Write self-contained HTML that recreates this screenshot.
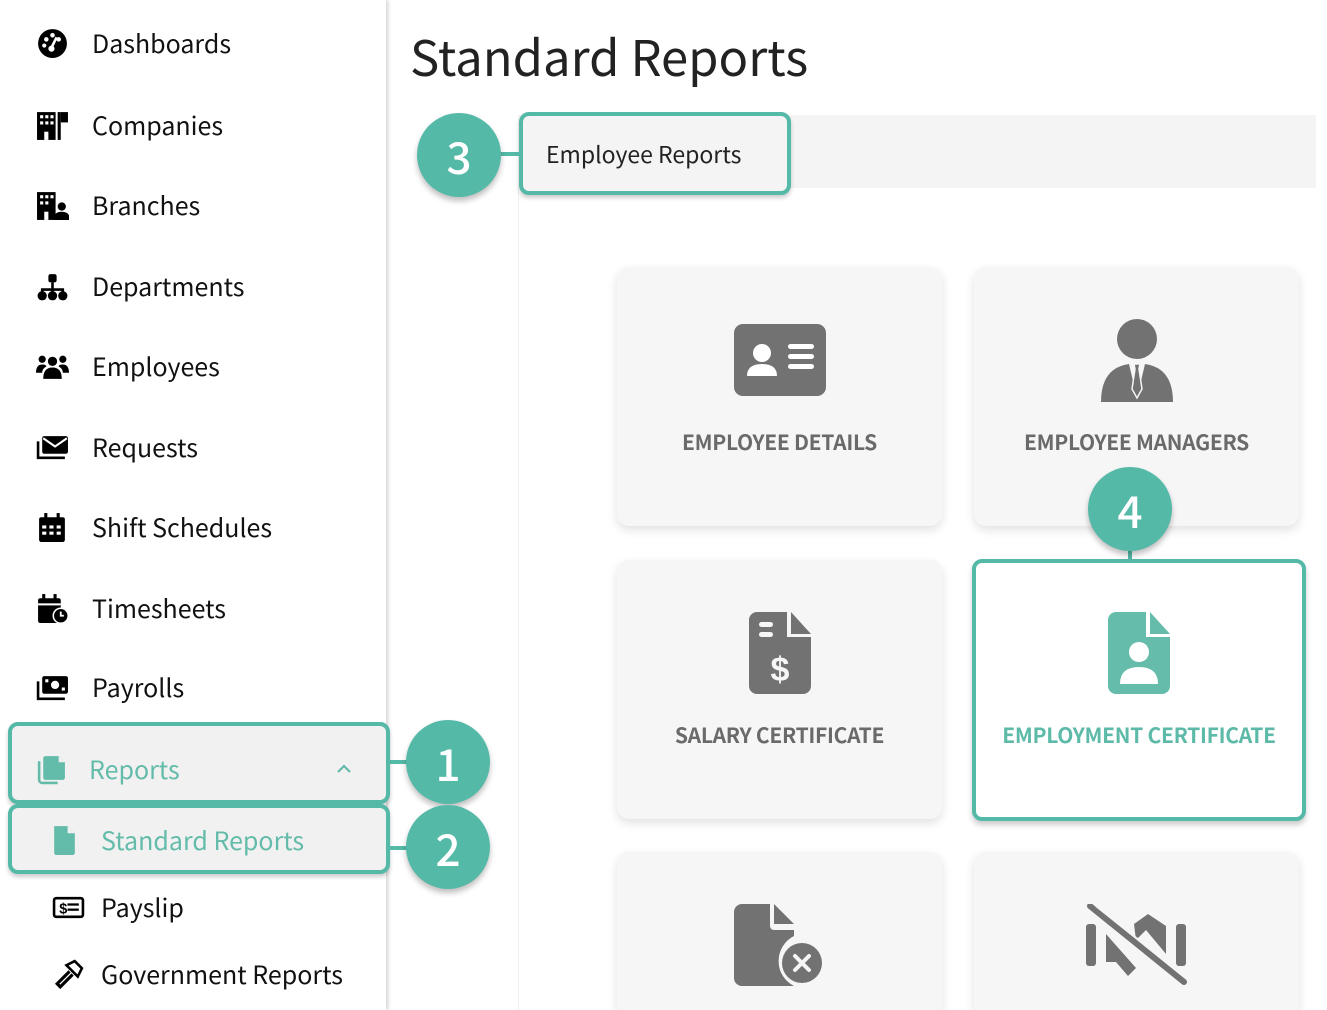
<!DOCTYPE html>
<html><head><meta charset="utf-8"><style>
*{margin:0;padding:0;box-sizing:border-box}
html{width:1327px;height:1010px;overflow:hidden}
body{width:1327px;height:1010px;overflow:hidden;background:#fff;font-family:"Noto Sans CJK JP","Liberation Sans",sans-serif;position:relative;color:#111}
.side{position:absolute;left:0;top:0;width:386px;height:1010px;background:#fff;box-shadow:2px 0 4px rgba(0,0,0,.18);z-index:2}
.item{position:absolute;left:0;height:40px;display:flex;align-items:center;font-size:25px}
.item svg{position:absolute;left:36px;width:33px;height:33px}
.item span{position:absolute;left:92px;white-space:nowrap}
.hl{position:absolute;border:4px solid #55b9a8;border-radius:10px;background:#f1f1f1;box-shadow:0 3px 4px rgba(0,0,0,.2)}
.badge{position:absolute;width:84px;height:84px;border-radius:50%;background:#55b9a8;color:#fff;font-size:44px;font-weight:500;display:flex;align-items:center;justify-content:center;box-shadow:0 4px 6px rgba(0,0,0,.25);z-index:5}
.line{position:absolute;background:#55b9a8;z-index:4}
.card{position:absolute;width:325px;height:259px;background:#f6f6f6;border-radius:12px;box-shadow:0 4px 10px rgba(0,0,0,.12)}
.card .lbl{position:absolute;top:160px;left:-10px;right:-10px;text-align:center;font-size:21px;font-weight:bold;color:#6a6a6a;letter-spacing:-0.3px}
.card svg{position:absolute;left:50%;transform:translateX(-50%)}
</style></head><body>
<div class="side">
 <div class="item" style="top:23px"><svg viewBox="0 0 32 32"><circle cx="16" cy="16" r="14" fill="#000"/><circle cx="10" cy="12" r="2.2" fill="#fff"/><circle cx="16" cy="8" r="2.2" fill="#fff"/><circle cx="22" cy="12" r="2.2" fill="#fff"/><circle cx="8" cy="18" r="2" fill="#fff"/><path d="M20 10 L15 20" stroke="#fff" stroke-width="2.5"/><circle cx="15" cy="21" r="3" fill="#fff"/></svg><span>Dashboards</span></div>
 <div class="item" style="top:105px"><svg viewBox="0 0 32 32"><rect x="1" y="3" width="18" height="27" fill="#000"/><rect x="21" y="3" width="3" height="27" fill="#000"/><rect x="24" y="3" width="7" height="10" fill="#000"/><g fill="#fff"><rect x="4" y="6" width="3" height="3"/><rect x="9" y="6" width="3" height="3"/><rect x="14" y="6" width="3" height="3"/><rect x="4" y="12" width="3" height="3"/><rect x="9" y="12" width="3" height="3"/><rect x="14" y="12" width="3" height="3"/><rect x="8" y="22" width="4" height="8"/></g></svg><span>Companies</span></div>
 <div class="item" style="top:185px"><svg viewBox="0 0 32 32"><rect x="1" y="3" width="18" height="27" fill="#000"/><g fill="#fff"><rect x="4" y="6" width="3" height="3"/><rect x="9" y="6" width="3" height="3"/><rect x="14" y="6" width="3" height="3"/><rect x="4" y="12" width="3" height="3"/><rect x="9" y="12" width="3" height="3"/><rect x="8" y="22" width="4" height="8"/></g><circle cx="25" cy="17" r="4" fill="#000"/><path d="M17 30 Q17 22 25 22 Q33 22 33 30Z" fill="#000"/></svg><span>Branches</span></div>
 <div class="item" style="top:266px"><svg viewBox="0 0 32 32"><rect x="12" y="4" width="8" height="8" rx="2" fill="#000"/><path d="M16 12v5M6 24v-5h20v5M16 17v7" stroke="#000" stroke-width="2.5" fill="none"/><circle cx="6" cy="25" r="4.5" fill="#000"/><circle cx="16" cy="25" r="4.5" fill="#000"/><circle cx="26" cy="25" r="4.5" fill="#000"/></svg><span>Departments</span></div>
 <div class="item" style="top:346px"><svg viewBox="0 0 32 32"><circle cx="16" cy="11" r="4.5" fill="#000"/><circle cx="6" cy="9" r="3.5" fill="#000"/><circle cx="26" cy="9" r="3.5" fill="#000"/><path d="M7 28 Q7 17 16 17 Q25 17 25 28Z" fill="#000"/><path d="M0 22 Q0 14 6 14 Q10 14 10 16 Q6 18 6 22Z" fill="#000"/><path d="M32 22 Q32 14 26 14 Q22 14 22 16 Q26 18 26 22Z" fill="#000"/></svg><span>Employees</span></div>
 <div class="item" style="top:427px"><svg viewBox="0 0 32 32"><path d="M2 10v16h26" stroke="#000" stroke-width="2.5" fill="none"/><rect x="6" y="5" width="25" height="17" rx="2" fill="#000"/><path d="M7 7 L18.5 15 L30 7" stroke="#fff" stroke-width="2" fill="none"/></svg><span>Requests</span></div>
 <div class="item" style="top:507px"><svg viewBox="0 0 32 32"><rect x="3" y="6" width="25" height="24" rx="2" fill="#000"/><rect x="8" y="2" width="3" height="6" fill="#000"/><rect x="20" y="2" width="3" height="6" fill="#000"/><g fill="#fff"><rect x="6" y="14" width="4" height="3"/><rect x="13" y="14" width="4" height="3"/><rect x="20" y="14" width="4" height="3"/><rect x="6" y="20" width="4" height="3"/><rect x="13" y="20" width="4" height="3"/><rect x="20" y="20" width="4" height="3"/></g></svg><span>Shift Schedules</span></div>
 <div class="item" style="top:588px"><svg viewBox="0 0 32 32"><rect x="2" y="6" width="22" height="24" rx="2" fill="#000"/><rect x="6" y="2" width="3" height="6" fill="#000"/><rect x="17" y="2" width="3" height="6" fill="#000"/><rect x="2" y="11" width="22" height="2" fill="#fff"/><circle cx="24" cy="23" r="8" fill="#fff"/><circle cx="24" cy="23" r="6.5" fill="#000"/><path d="M24 19v4h3" stroke="#fff" stroke-width="1.8" fill="none"/></svg><span>Timesheets</span></div>
 <div class="item" style="top:667px"><svg viewBox="0 0 32 32"><path d="M2 10v17h26" stroke="#000" stroke-width="2.5" fill="none"/><rect x="6" y="5" width="25" height="17" rx="2" fill="#000"/><circle cx="18.5" cy="13.5" r="4" fill="#fff"/><rect x="9" y="8" width="3" height="3" fill="#fff"/><rect x="25" y="16" width="3" height="3" fill="#fff"/></svg><span>Payrolls</span></div>
 <div class="hl" style="left:8px;top:722px;width:382px;height:82px"></div>
 <div class="hl" style="left:8px;top:804px;width:382px;height:70px"></div>
 <div class="item" style="top:749px;color:#63bba9"><svg viewBox="0 0 32 32" style="left:35px"><path d="M4 8v18a3 3 0 0 0 3 3h15" stroke="#63bba9" stroke-width="2.5" fill="none"/><path d="M10 3h13l6 6v15a2 2 0 0 1-2 2H10a2 2 0 0 1-2-2V5a2 2 0 0 1 2-2z" fill="#63bba9"/><path d="M23 3v6h6" fill="#f1f1f1"/></svg><span style="left:89px">Reports</span><svg viewBox="0 0 20 20" style="left:334px;width:20px;height:20px"><path d="M4 13 L10 7 L16 13" stroke="#63bba9" stroke-width="2.2" fill="none"/></svg></div>
 <div class="item" style="top:820px;color:#63bba9"><svg viewBox="0 0 32 32" style="left:48px"><path d="M6 2h13l7 7v19a2 2 0 0 1-2 2H8a2 2 0 0 1-2-2z" fill="#63bba9"/><path d="M19 2v7h7" fill="#f1f1f1"/></svg><span style="left:101px">Standard Reports</span></div>
 <div class="item" style="top:887px"><svg viewBox="0 0 32 32" style="left:52px"><rect x="2" y="7" width="28" height="18" rx="2" fill="none" stroke="#000" stroke-width="2.5"/><text x="7" y="22" font-size="14" font-weight="bold" font-family="Liberation Sans">$</text><rect x="15" y="12" width="11" height="2.2" fill="#000"/><rect x="15" y="17" width="11" height="2.2" fill="#000"/></svg><span style="left:101px">Payslip</span></div>
 <div class="item" style="top:954px"><svg viewBox="0 0 32 32" style="left:52px"><path d="M14 7 L22 3 L29 10 L25 18 Z" fill="none" stroke="#000" stroke-width="2.5"/><path d="M17 13 L5 25 L8 28 L20 16" fill="none" stroke="#000" stroke-width="3"/></svg><span style="left:101px">Government Reports</span></div>
</div>
<div class="line" style="left:386px;top:760px;width:30px;height:4px"></div>
<div class="line" style="left:386px;top:846px;width:30px;height:4px"></div>
<div class="badge" style="left:406px;top:720px">1</div>
<div class="badge" style="left:406px;top:805px">2</div>

<div style="position:absolute;left:410px;top:20px;font-size:49px;color:#222;white-space:nowrap">Standard Reports</div>
<div style="position:absolute;left:518px;top:115px;width:798px;height:73px;background:#f4f4f4"></div>
<div style="position:absolute;left:518px;top:188px;width:1px;height:822px;background:#eee"></div>
<div class="hl" style="left:519px;top:112px;width:272px;height:83px;background:#f4f4f4;z-index:3"></div>
<div style="position:absolute;left:546px;top:136px;font-size:23px;color:#222;z-index:4">Employee Reports</div>
<div class="line" style="left:495px;top:152px;width:26px;height:4px"></div>
<div class="badge" style="left:417px;top:113px">3</div>

<div class="card" style="left:617px;top:267px"><svg width="92" height="72" viewBox="0 0 92 72" style="top:57px"><rect width="92" height="72" rx="9" fill="#727272"/><circle cx="28" cy="29" r="9" fill="#fff"/><path d="M13 52 Q13 40 28 40 Q43 40 43 52Z" fill="#fff"/><rect x="54" y="20" width="26" height="5" rx="2.5" fill="#fff"/><rect x="54" y="30" width="26" height="5" rx="2.5" fill="#fff"/><rect x="54" y="40" width="26" height="5" rx="2.5" fill="#fff"/></svg><div class="lbl">EMPLOYEE DETAILS</div></div>
<div class="card" style="left:974px;top:267px"><svg width="72" height="84" viewBox="0 0 72 84" style="top:51px"><ellipse cx="36" cy="21" rx="20" ry="20" fill="#727272"/><path d="M0 84 Q0 50 28 46 L36 80 L44 46 Q72 50 72 84Z" fill="#727272"/><path d="M33 46h6l-1 5 3 20-5 9-5-9 3-20z" fill="#727272" stroke="#f6f6f6" stroke-width="1.5"/></svg><div class="lbl">EMPLOYEE MANAGERS</div></div>
<div class="card" style="left:617px;top:560px"><svg width="62" height="82" viewBox="0 0 62 82" style="top:52px"><path d="M8 0h30v25h24v49a8 8 0 0 1-8 8H8a8 8 0 0 1-8-8V8a8 8 0 0 1 8-8z" fill="#727272"/><path d="M42 0l20 22H42z" fill="#727272"/><rect x="10" y="10" width="14" height="5" rx="2.5" fill="#f6f6f6"/><rect x="10" y="20" width="14" height="5" rx="2.5" fill="#f6f6f6"/><text x="31" y="69" text-anchor="middle" font-size="34" font-weight="bold" fill="#f6f6f6" font-family="Liberation Sans">$</text></svg><div class="lbl">SALARY CERTIFICATE</div></div>
<div class="card" style="left:972px;top:559px;width:334px;height:262px;background:#fff;border:4px solid #55b9a8;border-radius:10px;box-shadow:0 4px 6px rgba(0,0,0,.2)"><svg width="62" height="82" viewBox="0 0 62 82" style="top:49px"><path d="M8 0h30v25h24v49a8 8 0 0 1-8 8H8a8 8 0 0 1-8-8V8a8 8 0 0 1 8-8z" fill="#66bcaa"/><path d="M42 0l20 22H42z" fill="#66bcaa"/><circle cx="31" cy="40" r="10" fill="#fff"/><path d="M12 72 Q12 55 31 55 Q50 55 50 72Z" fill="#fff"/></svg><div class="lbl" style="top:157px;color:#5dbaa8">EMPLOYMENT CERTIFICATE</div></div>
<div class="line" style="left:1128px;top:540px;width:4px;height:22px"></div>
<div class="badge" style="left:1088px;top:467px">4</div>

<div class="card" style="left:617px;top:852px;height:158px;border-radius:12px 12px 0 0"><svg width="92" height="82" viewBox="0 0 92 82" style="top:52px"><path d="M8 0h28v22a4 4 0 0 0 4 4h20v6a28 28 0 0 0 0 50H8a8 8 0 0 1-8-8V8a8 8 0 0 1 8-8z" fill="#727272"/><path d="M40 0l20 20H40z" fill="#727272"/><circle cx="68" cy="59" r="23" fill="#f6f6f6"/><circle cx="68" cy="59" r="20" fill="#727272"/><path d="M61 52l14 14M75 52L61 66" stroke="#f6f6f6" stroke-width="4" stroke-linecap="round"/></svg></div>
<div class="card" style="left:974px;top:852px;height:158px;border-radius:12px 12px 0 0"><svg width="102" height="82" viewBox="0 0 102 82" style="top:52px"><rect x="0" y="20" width="10" height="42" rx="3" fill="#727272"/><rect x="90" y="20" width="10" height="42" rx="3" fill="#727272"/><path d="M20 30 L50 64 L42 72 L30 58 L20 58Z" fill="#727272"/><path d="M48 20 L62 10 L80 22 L80 50 L60 26 L50 36Z" fill="#727272"/><path d="M4 2 L98 78" stroke="#727272" stroke-width="6" stroke-linecap="round"/><path d="M10 2 L98 72" stroke="#f6f6f6" stroke-width="2"/></svg></div>
</body></html>
